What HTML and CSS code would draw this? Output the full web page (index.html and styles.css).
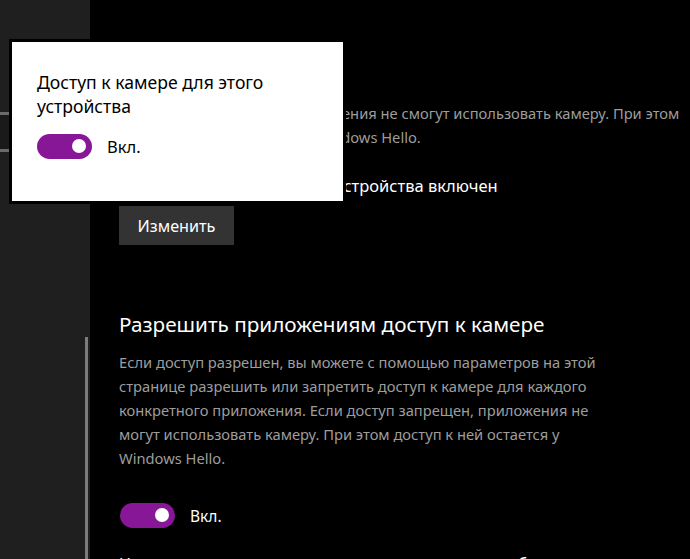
FILE: index.html
```html
<!DOCTYPE html>
<html lang="ru">
<head>
  <meta charset="UTF-8">
  <meta name="viewport" content="width=device-width, initial-scale=1.0">
  <title>Камера</title>
  <link rel="stylesheet" href="styles.css">
</head>
<body>
  <div class="app">
    <div class="sidebar">
      <div class="search-box"></div>
      <div class="scrollbar"></div>
    </div>

    <div class="main">
      <div class="section section-device">
        <h2 class="section-title">Камера</h2>
        <p class="section-text">Если доступ запрещен, приложения не смогут использовать камеру. При этом доступ к камере остается у Windows Hello.</p>
        <div class="status">Доступ к камере для этого устройства включен</div>
        <button class="btn">Изменить</button>
      </div>

      <div class="section section-apps">
        <h2 class="section-title">Разрешить приложениям доступ к камере</h2>
        <p class="section-text">Если доступ разрешен, вы можете с помощью параметров на этой странице разрешить или запретить доступ к камере для каждого конкретного приложения. Если доступ запрещен, приложения не могут использовать камеру. При этом доступ к ней остается у Windows Hello.</p>
        <div class="toggle-row">
          <span class="toggle on"><span class="knob"></span></span>
          <span class="toggle-label">Вкл.</span>
        </div>
        <div class="note">Некоторые классические приложения могут не отображаться в этом списке</div>
      </div>
    </div>

    <div class="flyout">
      <div class="flyout-title">Доступ к камере для этого устройства</div>
      <div class="toggle-row">
        <span class="toggle on"><span class="knob"></span></span>
        <span class="toggle-label">Вкл.</span>
      </div>
    </div>
  </div>
</body>
</html>
```

FILE: styles.css
```css
body {
  margin: 0;
  background-color: #000000;
  color: #ffffff;
  font-family: "Noto Sans", "Open Sans", sans-serif;
  overflow: hidden;
}

.app {
  display: flex;
  height: 559px;
  position: relative;
  overflow: hidden;
}

/* Sidebar */
.sidebar {
  width: 90px;
  flex-shrink: 0;
  background-color: #1f1f1f;
  position: relative;
}

.search-box {
  margin-top: 112px;
  height: 34px;
  border-top: 3px solid #6b6b6b;
  border-bottom: 3px solid #6b6b6b;
  background-color: #1a1a1a;
}

.scrollbar {
  position: absolute;
  right: 2px;
  top: 337px;
  bottom: 0;
  width: 3px;
  background-color: #7c7c7c;
}

/* Main content */
.main {
  flex: 1;
  padding: 45px 0 0 29px;
}

.section-title {
  margin: 0 0 25px;
  font-size: 20.7px;
  font-weight: normal;
  line-height: 32px;
}

.section-text {
  width: 490px;
  margin: 0;
  font-size: 14.7px;
  line-height: 24px;
  color: #9d9d9d;
}

.section-device .section-text {
  width: 572px;
  line-height: 23.5px;
}

.status {
  margin-top: 25px;
  font-size: 16.5px;
  line-height: 24px;
}

.btn {
  display: block;
  margin-top: 8px;
  width: 115px;
  height: 39px;
  border: none;
  background-color: #333333;
  color: #ffffff;
  font-family: inherit;
  font-size: 16.2px;
  padding: 0;
}

.section-apps {
  margin-top: 63px;
}

.section-apps .section-title {
  margin-bottom: 10px;
}

/* Toggle */
.toggle-row {
  display: flex;
  align-items: center;
  gap: 15px;
  margin-top: 33px;
  margin-left: 1px;
}

.toggle {
  width: 55px;
  height: 25px;
  border-radius: 13px;
  background-color: #881798;
  position: relative;
}

.toggle .knob {
  position: absolute;
  top: 5px;
  right: 6px;
  width: 14px;
  height: 14px;
  border-radius: 50%;
  background-color: #ffffff;
}

.toggle-label {
  font-size: 15.5px;
}

.note {
  margin-top: 24px;
  font-size: 16px;
  line-height: 24px;
}

/* Flyout */
.flyout {
  position: absolute;
  left: 9px;
  top: 39px;
  width: 306px;
  height: 159px;
  padding: 0 0 0 25px;
  border: 3px solid #000000;
  background-color: #ffffff;
  color: #000000;
}

.flyout-title {
  margin-top: 28px;
  width: 290px;
  font-size: 17.6px;
  line-height: 24px;
}

.flyout .toggle-row {
  margin-top: 16px;
  margin-left: 0;
}

.flyout .toggle-label {
  font-size: 16.5px;
}
```
